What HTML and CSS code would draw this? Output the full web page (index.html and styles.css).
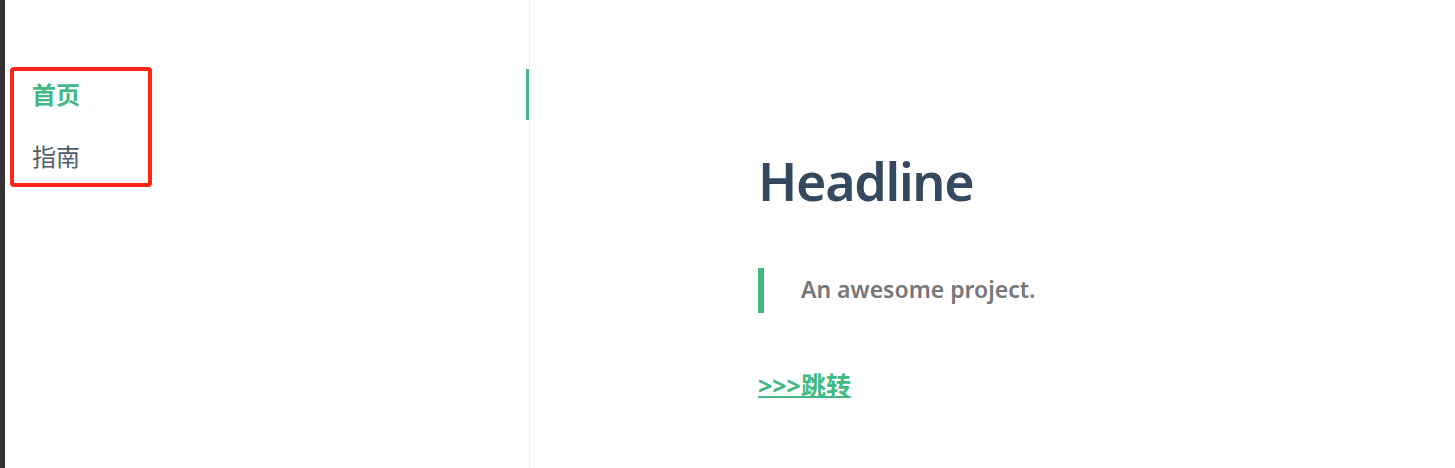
FILE: index.html
```html
<!DOCTYPE html>
<html lang="zh">
<head>
<meta charset="utf-8">
<title>Docs</title>
<link rel="stylesheet" href="styles.css">
</head>
<body>
<div class="app">
  <div class="strip"></div>
  <aside class="sidebar">
    <nav class="nav">
      <a class="nav-item active" href="#">首页</a>
      <a class="nav-item" href="#">指南</a>
    </nav>
    <span class="indicator"></span>
  </aside>
  <main class="content">
    <h1 class="headline">Headline</h1>
    <blockquote class="quote">An awesome project.</blockquote>
    <a class="jump" href="#">&gt;&gt;&gt;跳转</a>
  </main>
</div>
</body>
</html>
```

FILE: styles.css
```css
html, body {
  margin: 0;
  padding: 0;
  background: #fff;
}
body {
  font-family: "Noto Sans", "Noto Sans CJK SC", sans-serif;
  color: #34495e;
}
.app {
  display: flex;
  height: 468px;
  overflow: hidden;
}
.strip {
  width: 5px;
  flex: none;
  background: #333333;
}
.sidebar {
  position: relative;
  width: 525px;
  flex: none;
  border-right: 1px solid #eee;
  padding-top: 67px;
  box-sizing: border-box;
}
.nav {
  display: flex;
  flex-direction: column;
  margin-left: 5px;
  width: 142px;
  height: 120px;
  box-sizing: border-box;
  border: 4px solid #ff2416;
  border-radius: 4px;
  padding: 8px 0 0 18px;
  gap: 30px;
}
.nav-item {
  font-size: 24px;
  line-height: 32px;
  color: #505d6b;
  text-decoration: none;
}
.nav-item.active {
  color: #42b983;
  font-weight: 700;
}
.indicator {
  position: absolute;
  right: 0;
  top: 69px;
  width: 3px;
  height: 51px;
  background: #42b983;
}
.content {
  flex: 1;
  padding: 143px 0 0 228px;
}
.headline {
  margin: 0;
  font-size: 52px;
  line-height: 76px;
  font-weight: 600;
  letter-spacing: -1.3px;
  color: #34495e;
}
.quote {
  margin: 49px 0 0 0;
  border-left: 6px solid #42b983;
  padding: 0 0 4px 37px;
  height: 45px;
  box-sizing: border-box;
  display: flex;
  align-items: center;
  font-size: 23px;
  font-weight: 600;
  color: #777;
}
.jump {
  display: inline-block;
  margin-top: 56px;
  font-size: 25px;
  line-height: 32px;
  font-weight: 700;
  color: #42b983;
  text-decoration: underline;
  text-decoration-thickness: 2px;
}
```
